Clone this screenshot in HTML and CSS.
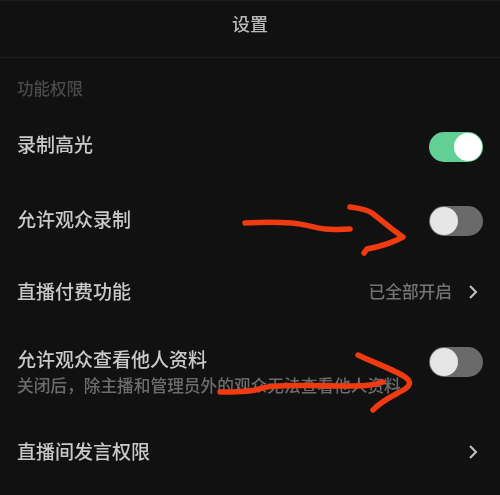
FILE: index.html
```html
<!DOCTYPE html>
<html lang="zh-CN">
<head>
<meta charset="utf-8">
<title>设置</title>
<link rel="stylesheet" href="styles.css">
</head>
<body>
<main class="screen">
  <header class="topbar">设置</header>
  <section class="list">
    <h2 class="section-label">功能权限</h2>
    <div class="row row-a">
      <span class="row-title">录制高光</span>
      <span class="toggle toggle-on"><span class="knob"></span></span>
    </div>
    <div class="row row-b">
      <span class="row-title">允许观众录制</span>
      <span class="toggle"><span class="knob"></span></span>
    </div>
    <div class="row row-c">
      <span class="row-title">直播付费功能</span>
      <span class="row-end">
        <span class="row-value">已全部开启</span>
        <svg class="chevron" viewBox="0 0 10 16"><path d="M2 2l6 6-6 6"/></svg>
      </span>
    </div>
    <div class="row row-d">
      <div class="row-text">
        <span class="row-title">允许观众查看他人资料</span>
        <span class="row-sub">关闭后，除主播和管理员外的观众无法查看他人资料</span>
      </div>
      <span class="toggle"><span class="knob"></span></span>
    </div>
    <div class="row row-e">
      <span class="row-title">直播间发言权限</span>
      <svg class="chevron" viewBox="0 0 10 16"><path d="M2 2l6 6-6 6"/></svg>
    </div>
  </section>
  <svg class="scribble" viewBox="0 0 500 495">
    <path d="M245 223C260 222 280 222 292 223C305 224 315 228 325 229C335 230 343 229 350 229"/>
    <path d="M350 207C358 208 366 209 372 213C380 219 392 230 403 237C392 243 378 247 367 249L364 253"/>
    <path d="M220 392C232 392 245 392 255 390C262 388 268 386 280 386C300 385 325 386 345 386C360 386 372 386 383 382"/>
    <path d="M358 355C372 362 395 370 405 377C411 381 411 385 405 389C395 395 382 400 373 410"/>
  </svg>
</main>
</body>
</html>
```
FILE: styles.css
```css
* { box-sizing: border-box; }
html, body { margin: 0; padding: 0; background: #111112; }
.screen {
  position: relative;
  width: 500px;
  height: 495px;
  overflow: hidden;
  background: #111112;
  border-top: 1px solid #1c1c1c;
  font-family: "Noto Sans CJK SC", "Noto Sans", sans-serif;
  filter: blur(0.45px);
}
.topbar {
  height: 57px;
  border-bottom: 1px solid #1d1d1e;
  display: flex;
  align-items: center;
  justify-content: center;
  padding-bottom: 12px;
  font-size: 18px;
  font-weight: 500;
  color: #b9b9b9;
}
.list { padding: 0 17px; }
.section-label {
  margin: 0;
  height: 50px;
  padding-top: 17px;
  font-size: 16.5px;
  line-height: 26px;
  font-weight: 500;
  color: #4a4a4a;
}
.row {
  display: flex;
  align-items: center;
  justify-content: space-between;
}
.row-a { height: 74px; }
.row-b { height: 75px; }
.row-c { height: 70px; }
.row-d { height: 76px; align-items: flex-start; padding-top: 20px; }
.row-e { height: 98px; }
.row-text { display: flex; flex-direction: column; margin-top: -1px; }
.row-title {
  margin-bottom: 2px;
  font-size: 19px;
  line-height: 26px;
  font-weight: 500;
  color: #cacaca;
}
.row-text .row-title { margin-bottom: 0; }
.row-sub {
  font-size: 16.7px;
  line-height: 26px;
  font-weight: 500;
  white-space: nowrap;
  color: #6c6c6c;
}
.row-end { display: flex; align-items: center; gap: 16px; }
.row-value { margin-bottom: 2px; font-size: 16.7px; font-weight: 500; color: #747474; }
.chevron {
  width: 10px;
  height: 16px;
  margin-right: 5px;
  fill: none;
  stroke: #c4c4c4;
  stroke-width: 2;
}
.toggle {
  display: flex;
  align-items: center;
  width: 54px;
  height: 30px;
  padding: 1px;
  border-radius: 15px;
  background: #6a6a6a;
}
.row-a .toggle { margin-top: 4px; }
.row-b .toggle { margin-top: 2px; }
.toggle .knob {
  width: 28px;
  height: 28px;
  border-radius: 50%;
  background: #e6e6e6;
}
.toggle-on { justify-content: flex-end; background: #62d094; }
.toggle-on .knob { background: #fff; }
.scribble {
  position: absolute;
  left: 0;
  top: -1px;
  width: 500px;
  height: 495px;
  fill: none;
  stroke: #f03a10;
  stroke-width: 5.5;
  stroke-linecap: round;
  stroke-linejoin: round;
}
```
